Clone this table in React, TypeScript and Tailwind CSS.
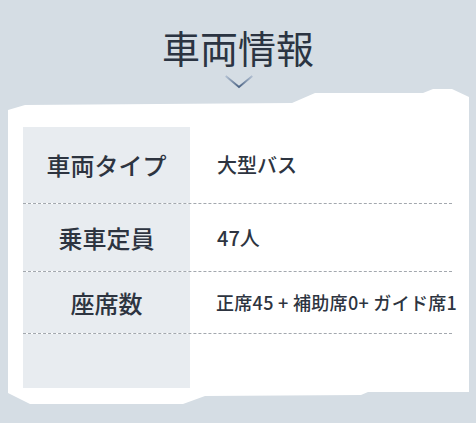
import React from "react";

const rows = [
  { label: "車両タイプ", value: "大型バス", h: "h-[77px]", small: false },
  { label: "乗車定員", value: "47人", h: "h-[68px]", small: false },
  { label: "座席数", value: "正席45 + 補助席0+ ガイド席1", h: "h-[62px]", small: true },
];

export default function App() {
  return (
    <div
      className="h-[423px] w-[476px] overflow-hidden bg-[#d5dde4]"
      style={{ fontFamily: '"Noto Sans CJK JP", "Noto Sans", sans-serif' }}
    >
      <div className="flex h-[89px] flex-col items-center">
        <h1 className="mt-[28px] text-[38px] leading-[38px] font-normal text-[#2b3442]">車両情報</h1>
        <svg width="46" height="22" viewBox="0 0 46 22" className="mt-[9px] ml-[1px]">
          <defs>
            <linearGradient id="chev" x1="0" x2="1" y1="0" y2="0">
              <stop offset="0" stopColor="#b3c1d3" />
              <stop offset="0.5" stopColor="#4b6384" />
              <stop offset="1" stopColor="#b3c1d3" />
            </linearGradient>
          </defs>
          <path d="M2 1.5 L23 19 L44 1.5" fill="none" stroke="url(#chev)" strokeWidth="3" />
        </svg>
      </div>

      <div className="relative ml-[8px] h-[315px] w-[461px]">
        <svg className="absolute inset-0" width="461" height="315" viewBox="0 0 461 315">
          <polygon
            fill="#ffffff"
            points="0,21 17,16 284,14 307,4 415,4 425,0 444,0 461,8 461,303 360,303 353,306 197,307 175,315 22,315 0,304"
          />
        </svg>
        <div className="relative ml-[15px] flex h-[299px] w-[429px] flex-col pt-[38px]">
          {rows.map((r) => (
            <div key={r.label} className={`flex ${r.h} border-b border-dashed border-[#a3a8ae]`}>
              <div className="flex w-[167px] shrink-0 items-center justify-center bg-[#e8ecf0] text-[24px] font-medium text-[#2d3440]">
                {r.label}
              </div>
              <div
                className={
                  r.small
                    ? "flex min-w-0 flex-1 items-center pl-[26px] text-[18px] font-medium tracking-[0.3px] whitespace-nowrap text-[#2d3440]"
                    : "flex min-w-0 flex-1 items-center pl-[27px] text-[20px] font-medium text-[#2d3440]"
                }
              >
                {r.value}
              </div>
            </div>
          ))}
          <div className="flex flex-1">
            <div className="w-[167px] bg-[#e8ecf0]" />
          </div>
        </div>
      </div>
    </div>
  );
}
